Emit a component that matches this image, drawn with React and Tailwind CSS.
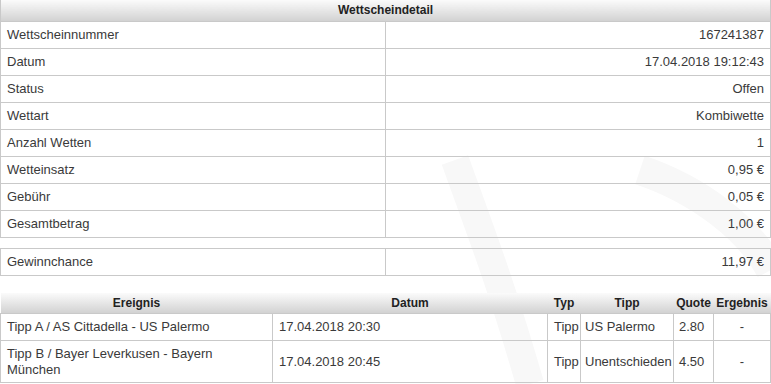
import React from 'react';

const details = [
  ['Wettscheinnummer', '167241387'],
  ['Datum', '17.04.2018 19:12:43'],
  ['Status', 'Offen'],
  ['Wettart', 'Kombiwette'],
  ['Anzahl Wetten', '1'],
  ['Wetteinsatz', '0,95 €'],
  ['Gebühr', '0,05 €'],
  ['Gesamtbetrag', '1,00 €'],
];

const tipps = [
  { event: 'Tipp A / AS Cittadella - US Palermo', date: '17.04.2018 20:30', typ: 'Tipp', tipp: 'US Palermo', quote: '2.80', result: '-', h: 'h-[27px]' },
  { event: 'Tipp B / Bayer Leverkusen - Bayern München', date: '17.04.2018 20:45', typ: 'Tipp', tipp: 'Unentschieden', quote: '4.50', result: '-', h: 'h-[42px]' },
];

const cell = 'border border-[#c9c9c9] px-[6px] align-middle';
const head = 'bg-gradient-to-b from-[#fbfbfb] to-[#d2d2d2] font-bold text-[12px] text-[#222] p-0';

export default function App() {
  return (
    <div className="relative w-[771px] h-[384px] bg-white overflow-hidden text-[13px] text-[#3a3a3a] leading-[16px]" style={{ fontFamily: '"Liberation Sans", Arial, sans-serif' }}>
      {/* faint watermark */}
      <svg className="absolute left-0 top-0 pointer-events-none" width="771" height="384">
        <path d="M455 160 C 480 230, 500 280, 530 384" stroke="#f8f8f8" strokeWidth="28" fill="none" />
        <path d="M640 170 C 700 190, 750 230, 771 270" stroke="#f8f8f8" strokeWidth="30" fill="none" />
      </svg>

      <div className="relative">
        <table className="w-[770px] table-fixed border-collapse">
          <colgroup>
            <col className="w-[385px]" />
            <col className="w-[385px]" />
          </colgroup>
          <thead>
            <tr className="h-[21px]">
              <th colSpan={2} className={`${head} border-x border-b border-[#c9c9c9] text-center`}>Wettscheindetail</th>
            </tr>
          </thead>
          <tbody>
            {details.map(([k, v]) => (
              <tr key={k} className="h-[27px]">
                <td className={`${cell} text-left`}>{k}</td>
                <td className={`${cell} text-right`}>{v}</td>
              </tr>
            ))}
          </tbody>
        </table>

        <table className="w-[770px] table-fixed border-collapse mt-[10px]">
          <colgroup>
            <col className="w-[385px]" />
            <col className="w-[385px]" />
          </colgroup>
          <tbody>
            <tr className="h-[27px]">
              <td className={`${cell} text-left`}>Gewinnchance</td>
              <td className={`${cell} text-right`}>11,97 €</td>
            </tr>
          </tbody>
        </table>

        <table className="w-[770px] table-fixed border-collapse mt-[17px]">
          <colgroup>
            <col className="w-[272px]" />
            <col className="w-[275px]" />
            <col className="w-[33px]" />
            <col className="w-[93px]" />
            <col className="w-[40px]" />
            <col className="w-[57px]" />
          </colgroup>
          <thead>
            <tr className="h-[21px]">
              <th className={`${head} text-center`}>Ereignis</th>
              <th className={`${head} text-center`}>Datum</th>
              <th className={`${head} text-center`}>Typ</th>
              <th className={`${head} text-center`}>Tipp</th>
              <th className={`${head} text-center`}>Quote</th>
              <th className={`${head} text-center`}>Ergebnis</th>
            </tr>
          </thead>
          <tbody>
            {tipps.map((t) => (
              <tr key={t.event} className={t.h}>
                <td className={`${cell} text-left`}>{t.event}</td>
                <td className={`${cell} text-left`}>{t.date}</td>
                <td className={`${cell} text-left px-[2px]`}>{t.typ}</td>
                <td className={`${cell} text-left pl-[4px] pr-0 whitespace-nowrap`}>{t.tipp}</td>
                <td className={`${cell} text-left pl-[5px] pr-0`}>{t.quote}</td>
                <td className={`${cell} text-center`}>{t.result}</td>
              </tr>
            ))}
          </tbody>
        </table>
      </div>
    </div>
  );
}
